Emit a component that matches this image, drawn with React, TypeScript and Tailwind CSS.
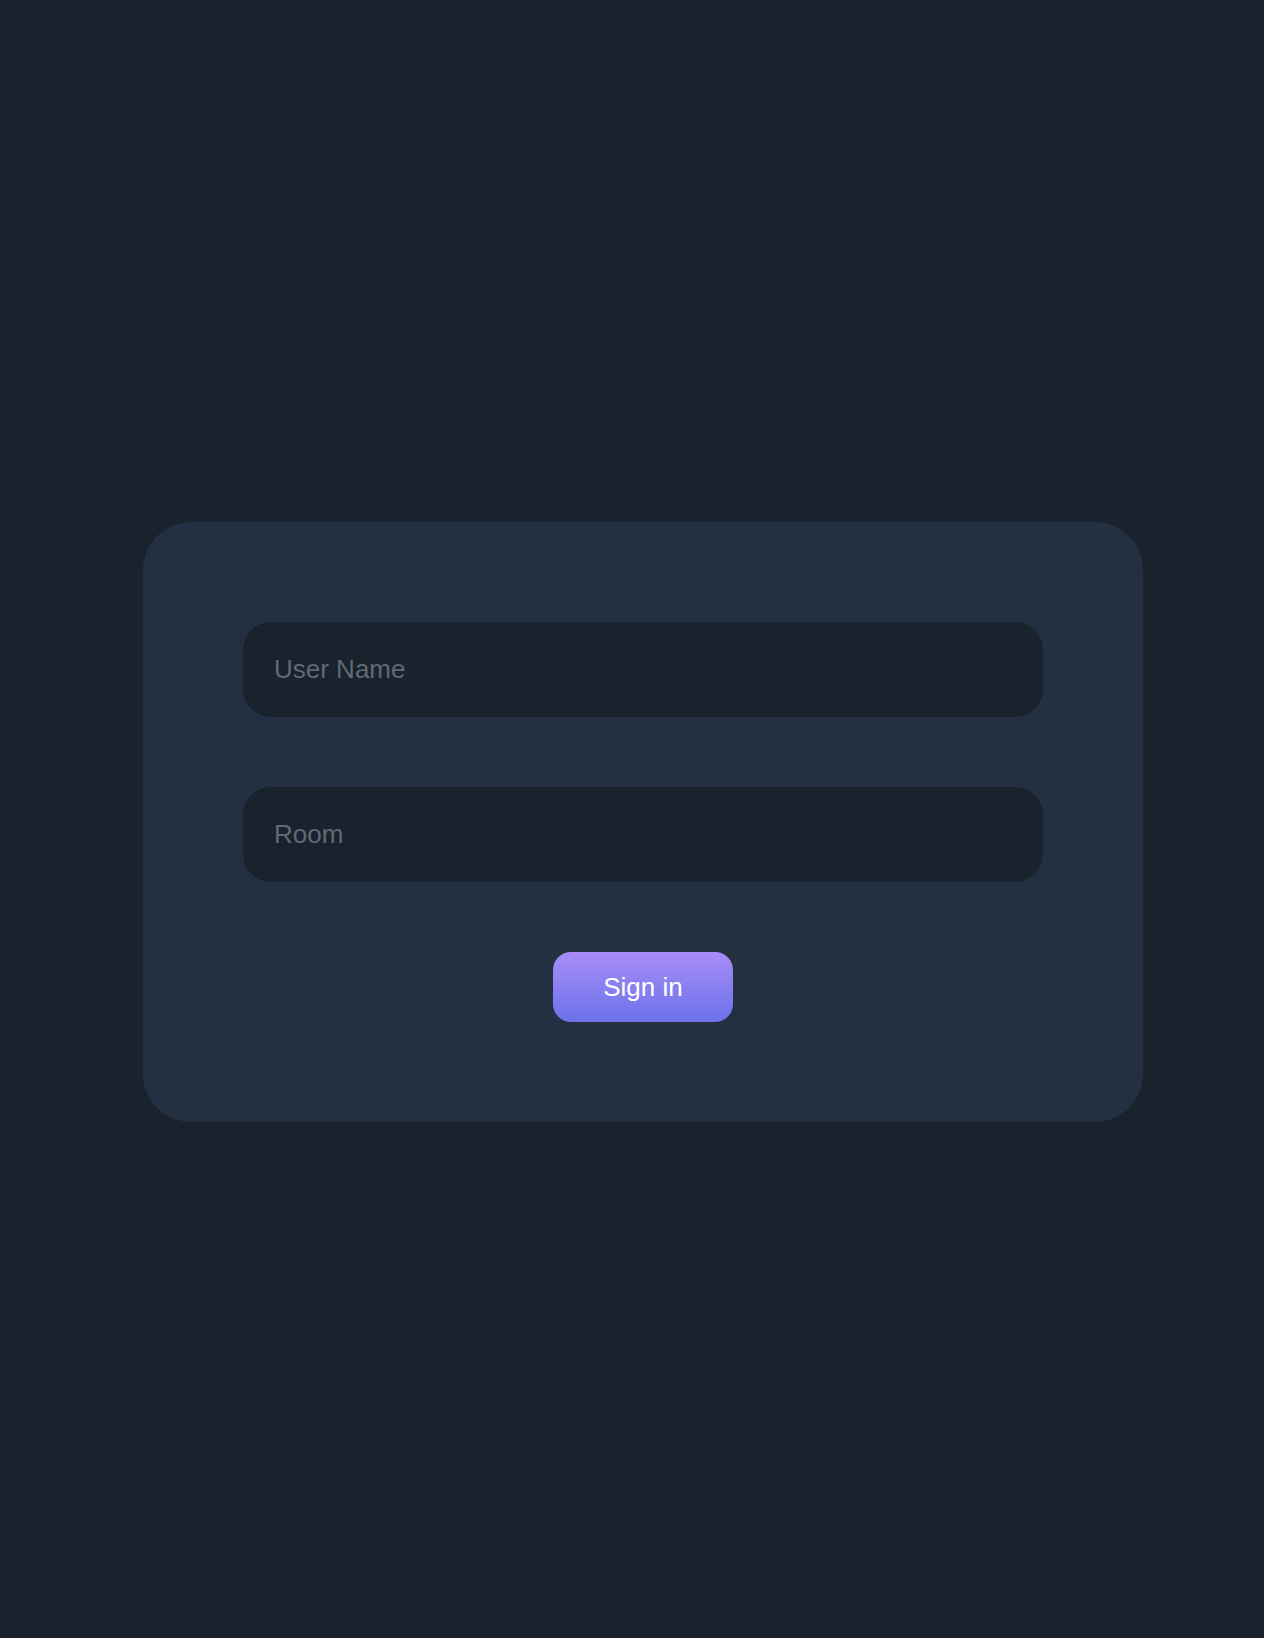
const inputStyle =
  "block w-[800px] h-[95px] rounded-[28px] bg-[#19222d] px-[31px] text-[26px] text-gray-200 placeholder:text-[#5f6a76] outline-none"

export default function App() {
  return (
    <div className="min-h-[1638px] w-full bg-[#19222d] flex items-center pl-[143px] pt-[6px] font-['Liberation_Sans',Arial,sans-serif]">
      <form className="w-[1000px] h-[600px] rounded-[48px] bg-[#223041] p-[100px] flex flex-col items-center gap-[70px]">
        <input className={inputStyle} placeholder="User Name" />
        <input className={inputStyle} placeholder="Room" />
        <button
          type="button"
          className="w-[180px] h-[70px] rounded-[18px] bg-gradient-to-b from-[#a98cf8] to-[#6a72ea] text-white text-[26px]"
        >
          Sign in
        </button>
      </form>
    </div>
  )
}
